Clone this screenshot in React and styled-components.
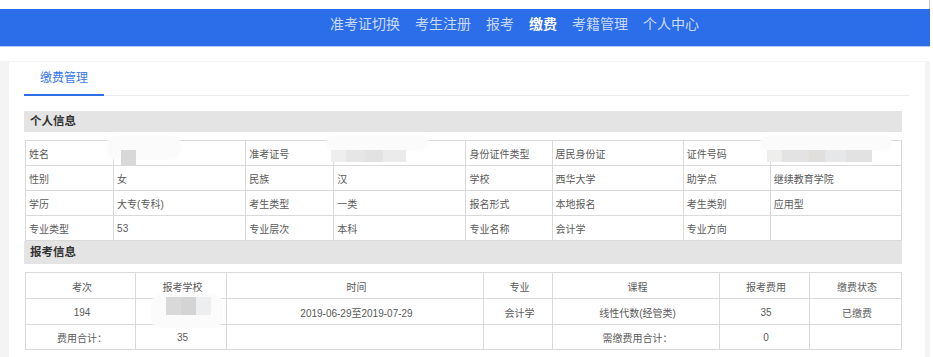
import React from "react";
import styled, { createGlobalStyle } from "styled-components";

const GlobalStyle = createGlobalStyle`
  html, body {
    margin: 0;
    padding: 0;
    background: #fff;
    font-family: "Liberation Sans", "Noto Sans CJK SC", sans-serif;
  }
`;

const Page = styled.div`
  width: 930px;
  height: 357px;
  overflow: hidden;
  border-right: 1px solid #fff;
`;

const TopStrip = styled.div`
  height: 9px;
  border-right: 1px solid #c8c8c8;
`;

const Header = styled.div`
  background: #2c6de9;
  border-bottom: 1px solid #b3ccf6;
  display: flex;
  align-items: flex-start;
  padding: 5px 0 0 330px;
  box-sizing: border-box;
  height: 38px;
`;

const NavItem = styled.a`
  font-size: 14px;
  line-height: 20px;
  margin-right: 15px;
  color: ${(props) => (props.$active ? "#fff" : "rgba(255,255,255,0.76)")};
  font-weight: ${(props) => (props.$active ? "bold" : "normal")};
  cursor: pointer;
`;

const Gap = styled.div`
  height: 14px;
`;

const Body = styled.div`
  background: #f4f4f4;
  padding: 1px 5px 0 9px;
  height: 300px;
`;

const Panel = styled.div`
  background: #fff;
  height: 100%;
  padding: 0 15px;
`;

const TabBar = styled.div`
  display: flex;
  border-bottom: 1px solid #ececec;
  height: 33px;
`;

const Tab = styled.div`
  padding: 0 16px;
  height: 32px;
  line-height: 33px;
  font-size: 12px;
  color: #3b78e7;
  border-bottom: 2px solid #2f6fe6;
`;

const Section = styled.div`
  width: 878px;
  margin-top: ${(props) => props.$top || 0}px;
`;

const SectionTitle = styled.div`
  height: ${(props) => props.$h || 21}px;
  line-height: ${(props) => props.$h || 21}px;
  background: #e4e4e4;
  padding-left: 6px;
  font-size: 11.5px;
  font-weight: bold;
  color: #333;
`;

const Table = styled.table`
  margin: ${(props) => props.$gap || 8}px 0 0 1px;
  width: 877px;
  table-layout: fixed;
  border-collapse: collapse;
  font-size: 10px;
  color: #5a5a5a;
`;

const Row = styled.tr`
  height: ${(props) => props.$h || 25}px;
`;

const Cell = styled.td`
  position: relative;
  border: 1px solid #dadada;
  padding: 1px 0 0 3px;
  text-align: ${(props) => (props.$center ? "center" : "left")};
  white-space: nowrap;
  overflow: visible;
`;

const Blob = styled.span`
  position: absolute;
  left: ${(props) => props.$l}px;
  top: ${(props) => props.$t}px;
  width: ${(props) => props.$w}px;
  height: ${(props) => props.$h}px;
  background: #fbfbfb;
  border-radius: 10px;
  filter: blur(1px);
`;

const Blocks = styled.span`
  position: absolute;
  left: ${(props) => props.$l}px;
  top: ${(props) => props.$t}px;
  width: ${(props) => props.$w}px;
  height: ${(props) => props.$h}px;
  background: ${(props) => props.$bg};
  filter: blur(0.6px);
`;

const Redacted = ({ blob, blocks, bg }) => (
  <>
    <Blob $l={blob[0]} $t={blob[1]} $w={blob[2]} $h={blob[3]} />
    <Blocks $l={blocks[0]} $t={blocks[1]} $w={blocks[2]} $h={blocks[3]} $bg={bg} />
  </>
);

const navs = ["准考证切换", "考生注册", "报考", "缴费", "考籍管理", "个人中心"];

const infoRows = [
  ["性别", "女", "民族", "汉", "学校", "西华大学", "助学点", "继续教育学院"],
  ["学历", "大专(专科)", "考生类型", "一类", "报名形式", "本地报名", "考生类别", "应用型"],
  ["专业类型", "53", "专业层次", "本科", "专业名称", "会计学", "专业方向", ""],
];

const infoCols = [88, 132, 88, 132, 86, 131, 87, 131];
const examCols = [110, 91, 257, 69, 167, 90, 92];
const examHead = ["考次", "报考学校", "时间", "专业", "课程", "报考费用", "缴费状态"];

const App = () => (
  <Page>
    <GlobalStyle />
    <TopStrip />
    <Header>
      {navs.map((n) => (
        <NavItem key={n} $active={n === "缴费"}>
          {n}
        </NavItem>
      ))}
    </Header>
    <Gap />
    <Body>
      <Panel>
        <TabBar>
          <Tab>缴费管理</Tab>
        </TabBar>
        <Section $top={15}>
          <SectionTitle>个人信息</SectionTitle>
          <Table>
            <colgroup>
              {infoCols.map((w, i) => (
                <col key={i} style={{ width: w }} />
              ))}
            </colgroup>
            <tbody>
              <Row>
                <Cell>姓名</Cell>
                <Cell>
                  <Redacted blob={[-8, -6, 75, 25]} blocks={[7, 9, 15, 15]} bg="#d8d8d8" />
                </Cell>
                <Cell>准考证号</Cell>
                <Cell>
                  <Redacted
                    blob={[-8, -6, 103, 16]}
                    blocks={[-3, 9, 75, 12]}
                    bg="linear-gradient(90deg,#eeeeee 0 20%,#e6e6e6 20% 45%,#e2e2e2 45% 70%,#ebebeb 70% 100%)"
                  />
                </Cell>
                <Cell>身份证件类型</Cell>
                <Cell>居民身份证</Cell>
                <Cell>证件号码</Cell>
                <Cell>
                  <Redacted
                    blob={[-11, -6, 132, 16]}
                    blocks={[-4, 9, 105, 12]}
                    bg="linear-gradient(90deg,#eeeeec 0 14%,#e3e3e3 14% 40%,#e0dfdd 40% 55%,#e6e7e8 55% 75%,#e2e2e3 75% 100%)"
                  />
                </Cell>
              </Row>
              {infoRows.map((r, i) => (
                <Row key={i}>
                  {r.map((c, j) => (
                    <Cell key={j}>{c}</Cell>
                  ))}
                </Row>
              ))}
            </tbody>
          </Table>
        </Section>
        <Section>
          <SectionTitle $h={23}>报考信息</SectionTitle>
          <Table $gap={8}>
            <colgroup>
              {examCols.map((w, i) => (
                <col key={i} style={{ width: w }} />
              ))}
            </colgroup>
            <tbody>
              <Row $h={26}>
                {examHead.map((h) => (
                  <Cell key={h} $center>
                    {h}
                  </Cell>
                ))}
              </Row>
              <Row $h={26}>
                <Cell $center>194</Cell>
                <Cell $center>
                  <Redacted
                    blob={[15, -5, 72, 34]}
                    blocks={[30, -2, 45, 18]}
                    bg="linear-gradient(90deg,#d9d9d9 0 33%,#d4d4d4 33% 66%,#eceef0 66% 100%)"
                  />
                </Cell>
                <Cell $center>2019-06-29至2019-07-29</Cell>
                <Cell $center>会计学</Cell>
                <Cell $center>线性代数(经管类)</Cell>
                <Cell $center>35</Cell>
                <Cell $center>已缴费</Cell>
              </Row>
              <Row>
                <Cell $center>费用合计：</Cell>
                <Cell $center>35</Cell>
                <Cell $center />
                <Cell $center />
                <Cell $center>需缴费用合计：</Cell>
                <Cell $center>0</Cell>
                <Cell $center />
              </Row>
            </tbody>
          </Table>
        </Section>
      </Panel>
    </Body>
  </Page>
);

export default App;
